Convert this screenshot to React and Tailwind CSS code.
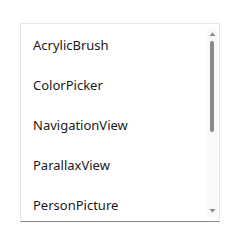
export default function App() {
  const items = ["AcrylicBrush", "ColorPicker", "NavigationView", "ParallaxView", "PersonPicture"];
  return (
    <div className="w-[244px] h-[243px] bg-white pt-[23px] pl-[20px]" style={{ fontFamily: "'Noto Sans', sans-serif" }}>
      <div className="relative w-[200px] h-[199px] border border-[#e5e5e5] border-b-[#8a8a8a] overflow-hidden">
        <div className="flex flex-col pt-[1px]">
          {items.map((t) => (
            <div key={t} className="h-[40px] flex items-center pl-[12px] text-[13px] text-[#1a1a1a] leading-none">
              {t}
            </div>
          ))}
        </div>
        <div className="absolute right-[1px] top-[3px] bottom-[3px] w-[12px] rounded-full bg-[#f9f9f9] flex flex-col items-center">
          <svg width="7" height="5" viewBox="0 0 7 5" className="mt-[5px]"><path d="M3.5 0.5 L6.5 4 L0.5 4 Z" fill="#8a8a8a" /></svg>
          <div className="mt-[4px] w-[4px] h-[91px] rounded-full bg-[#8a8a8a]" />
          <div className="flex-1" />
          <svg width="7" height="5" viewBox="0 0 7 5" className="mb-[5px]"><path d="M0.5 1 L6.5 1 L3.5 4.5 Z" fill="#8a8a8a" /></svg>
        </div>
      </div>
    </div>
  );
}
